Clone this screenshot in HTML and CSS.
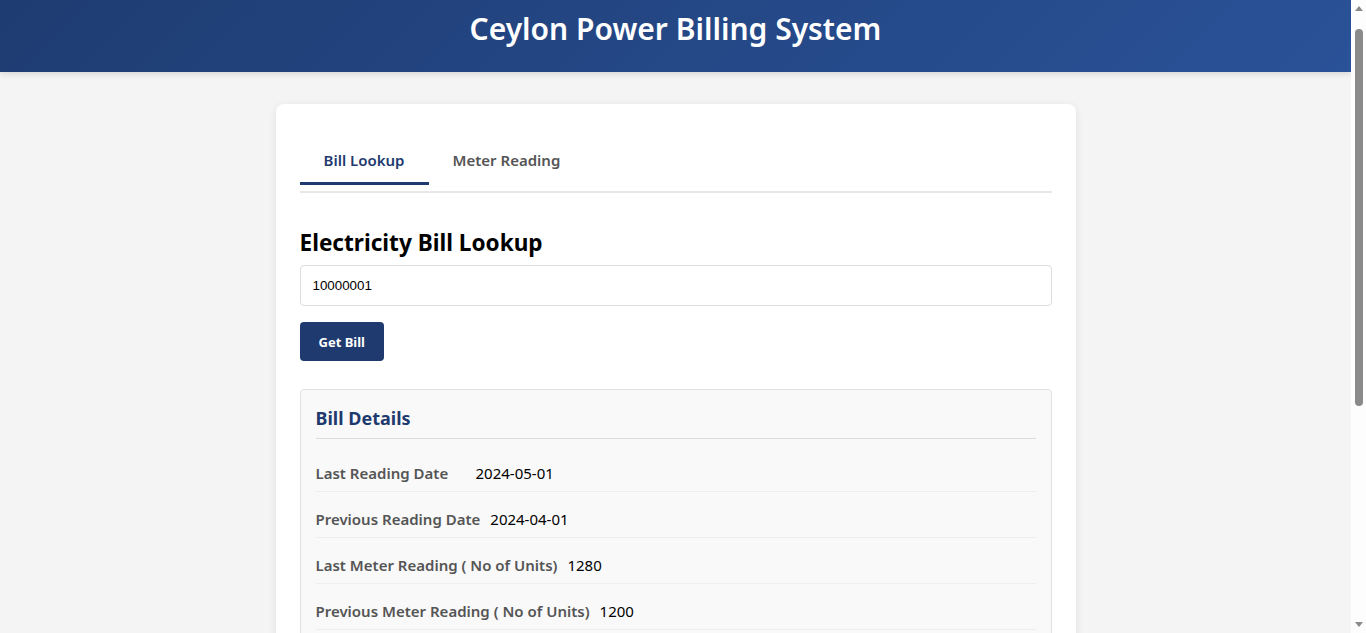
FILE: index.html
```html
<!DOCTYPE html>
<html lang="en">
<head>
<meta charset="utf-8">
<title>Ceylon Power Billing System</title>
<link rel="stylesheet" href="styles.css">
</head>
<body>
<header class="site-header">
  <h1 class="site-title">Ceylon Power Billing System</h1>
</header>
<main class="card">
  <nav class="tabs">
    <button class="tab tab-active" type="button">Bill Lookup</button>
    <button class="tab" type="button">Meter Reading</button>
  </nav>
  <section class="lookup">
    <h2 class="lookup-title">Electricity Bill Lookup</h2>
    <input class="lookup-input" type="text" value="10000001">
    <button class="btn-primary" type="button">Get Bill</button>
    <div class="bill-box">
      <h3 class="bill-title">Bill Details</h3>
      <div class="bill-row"><span class="bill-label">Last Reading Date</span><span class="bill-value">2024-05-01</span></div>
      <div class="bill-row"><span class="bill-label">Previous Reading Date</span><span class="bill-value">2024-04-01</span></div>
      <div class="bill-row"><span class="bill-label">Last Meter Reading ( No of Units)</span><span class="bill-value">1280</span></div>
      <div class="bill-row"><span class="bill-label">Previous Meter Reading ( No of Units)</span><span class="bill-value">1200</span></div>
    </div>
  </section>
</main>
<div class="scrollbar" aria-hidden="true">
  <span class="scroll-arrow scroll-up"></span>
  <span class="scroll-track"><span class="scroll-thumb"></span></span>
  <span class="scroll-arrow scroll-down"></span>
</div>
</body>
</html>
```
FILE: styles.css
```css
* { box-sizing: border-box; }
html, body { margin: 0; padding: 0; }
body {
  background: #f4f4f4;
  font-family: "Noto Sans", "Open Sans", sans-serif;
  color: #000;
  margin-right: 15px;
  overflow-x: hidden;
}
.site-header {
  height: 72px;
  background: linear-gradient(135deg, #1e3c72 0%, #2a5298 100%);
  box-shadow: 0 2px 6px rgba(0,0,0,0.12);
  display: flex;
  justify-content: center;
}
.site-title {
  margin: 0;
  padding-top: 7px;
  color: #fff;
  font-size: 30px;
  font-weight: 600;
  line-height: 44px;
}
.card {
  width: 800px;
  margin: 32px auto;
  background: #fff;
  border-radius: 8px;
  box-shadow: 0 2px 10px rgba(0,0,0,0.08);
  padding: 34px 24px 24px;
}
.tabs {
  display: flex;
  border-bottom: 2px solid #e8e8e8;
  padding-bottom: 6px;
}
.tab {
  font-family: inherit;
  background: none;
  border: none;
  border-bottom: 3px solid transparent;
  padding: 12px 24px;
  font-size: 15px;
  line-height: 20px;
  font-weight: 600;
  color: #555;
  cursor: pointer;
}
.tab-active {
  color: #1e3a6e;
  border-bottom-color: #1e3a6e;
}
.lookup {
  display: flex;
  flex-direction: column;
  align-items: flex-start;
}
.lookup-title {
  margin: 34px 0 6px;
  font-size: 22.6px;
  line-height: 32px;
  font-weight: 700;
}
.lookup-input {
  width: 100%;
  height: 41px;
  border: 1px solid #ddd;
  border-radius: 4px;
  padding: 0 12px;
  font-family: "Liberation Sans", Arial, sans-serif;
  font-size: 13.33px;
  color: #000;
}
.btn-primary {
  margin-top: 16px;
  height: 39px;
  padding: 0 19px;
  background: #1f3a6e;
  color: #fff;
  border: none;
  border-radius: 4px;
  font-family: inherit;
  font-size: 13px;
  font-weight: 700;
  cursor: pointer;
}
.bill-box {
  margin-top: 28px;
  width: 100%;
  background: #f9f9f9;
  border: 1px solid #e2e2e2;
  border-radius: 4px;
  padding: 16px 15px;
}
.bill-title {
  margin: 0 0 7px;
  padding-bottom: 8px;
  border-bottom: 1px solid #ddd;
  color: #1e3a6e;
  font-size: 18px;
  line-height: 24px;
  font-weight: 700;
}
.bill-row {
  display: flex;
  padding: 18px 0 8px;
  border-bottom: 1px solid #eee;
  font-size: 15px;
  line-height: 19px;
}
.bill-label {
  min-width: 150px;
  margin-right: 10px;
  color: #555;
  font-weight: 600;
}
.bill-value {
  color: #000;
}
.scrollbar {
  position: fixed;
  top: 0;
  right: 0;
  width: 15px;
  height: 100vh;
  background: #fdfdfd;
  display: flex;
  flex-direction: column;
  align-items: center;
}
.scroll-arrow {
  flex: 0 0 17px;
  display: flex;
  align-items: center;
  justify-content: center;
}
.scroll-up::before,
.scroll-down::before {
  content: "";
  border-left: 4px solid transparent;
  border-right: 4px solid transparent;
}
.scroll-up::before { border-bottom: 5px solid #8a8a8a; }
.scroll-down::before { border-top: 5px solid #8a8a8a; }
.scroll-track {
  flex: 1;
  width: 100%;
  display: flex;
  justify-content: center;
  padding-top: 12px;
}
.scroll-thumb {
  width: 8px;
  height: 377px;
  background: #8a8a8a;
  border-radius: 4px;
}
```
